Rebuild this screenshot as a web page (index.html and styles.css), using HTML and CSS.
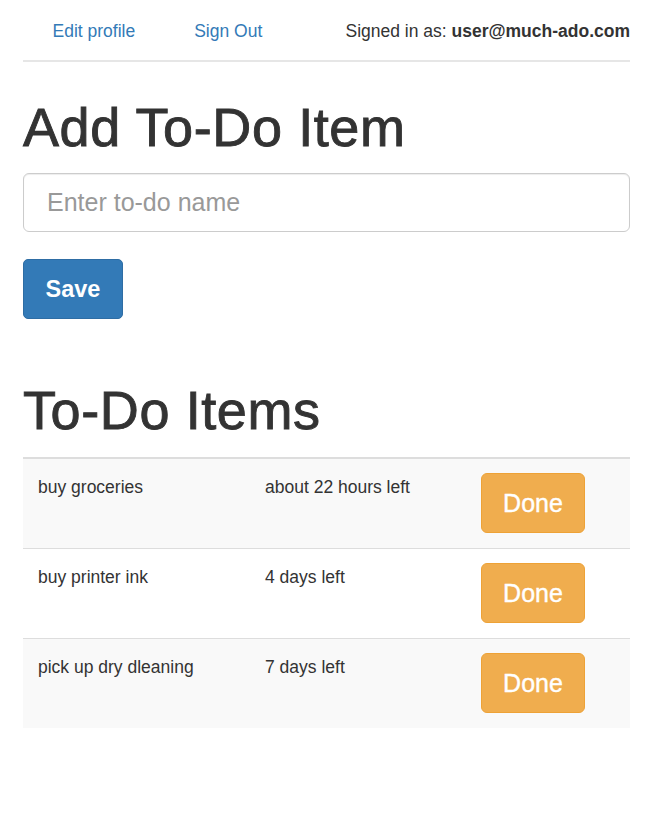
FILE: index.html
```html
<!DOCTYPE html>
<html lang="en">
<head>
<meta charset="utf-8">
<title>To-Do</title>
<link rel="stylesheet" href="styles.css">
</head>
<body>
<div class="container">
  <nav class="topnav">
    <ul class="nav-links">
      <li><a href="#">Edit profile</a></li>
      <li><a href="#">Sign Out</a></li>
    </ul>
    <div class="signed-in">Signed in as: <strong>user@much-ado.com</strong></div>
  </nav>

  <h1 class="title title-first">Add To-Do Item</h1>
  <form class="add-form">
    <input class="todo-input" type="text" placeholder="Enter to-do name">
    <button class="btn-save" type="button">Save</button>
  </form>

  <h1 class="title title-second">To-Do Items</h1>
  <table class="todo-table">
    <colgroup>
      <col class="col-name">
      <col class="col-time">
      <col class="col-action">
    </colgroup>
    <tbody>
      <tr>
        <td>buy groceries</td>
        <td>about 22 hours left</td>
        <td><button class="btn-done" type="button">Done</button></td>
      </tr>
      <tr>
        <td>buy printer ink</td>
        <td>4 days left</td>
        <td><button class="btn-done" type="button">Done</button></td>
      </tr>
      <tr>
        <td>pick up dry dleaning</td>
        <td>7 days left</td>
        <td><button class="btn-done" type="button">Done</button></td>
      </tr>
    </tbody>
  </table>
</div>
</body>
</html>
```

FILE: styles.css
```css
* { box-sizing: border-box; }

body {
  margin: 0;
  background: #fff;
  color: #333;
  font-family: "Liberation Sans", Arial, Helvetica, sans-serif;
  font-size: 17.5px;
}

.container {
  padding: 0 24px 0 23px;
}

.topnav {
  display: flex;
  align-items: center;
  justify-content: space-between;
  height: 62px;
  padding-top: 3px;
  border-bottom: 2px solid #e6e6e6;
}

.nav-links {
  display: flex;
  list-style: none;
  margin: 0;
  padding: 0;
}

.nav-links a {
  display: block;
  padding: 0 29.5px;
  color: #337ab7;
  text-decoration: none;
}

.signed-in strong {
  font-weight: bold;
}

.title {
  font-size: 54px;
  font-weight: normal;
  line-height: 58px;
  letter-spacing: 0.6px;
  margin: 0 0 17px;
  color: #333;
  -webkit-text-stroke: 0.9px #333;
}

.title-first { margin-top: 36px; }
.title-second { margin-top: 62px; margin-bottom: 18px; }

.add-form {
  margin: 0;
}

.todo-input {
  display: block;
  width: 100%;
  height: 59px;
  padding: 0 23px;
  border: 1px solid #ccc;
  border-radius: 6px;
  box-shadow: inset 0 1px 1px rgba(0,0,0,.075);
  font-family: inherit;
  font-size: 25px;
  color: #555;
  outline: none;
}

.todo-input::placeholder { color: #999; }

.btn-save {
  display: block;
  margin-top: 27px;
  width: 100px;
  height: 60px;
  background: #337ab7;
  border: 1px solid #2e6da4;
  border-radius: 5px;
  color: #fff;
  font-family: inherit;
  font-size: 23.5px;
  font-weight: bold;
  padding: 0;
}

.todo-table {
  width: 100%;
  border-collapse: collapse;
  table-layout: fixed;
  border-top: 2px solid #ddd;
}

.col-name { width: 227px; }
.col-time { width: 216px; }

.todo-table td {
  vertical-align: top;
  padding: 14px 15px 15px;
  line-height: 29px;
  border-top: 1px solid #ddd;
}

.todo-table tr:first-child td { border-top: none; }

.todo-table tr:nth-child(odd) td { background: #f9f9f9; }

.btn-done {
  display: block;
  width: 104px;
  height: 60px;
  background: #f0ad4e;
  border: 1px solid #eea236;
  border-radius: 6px;
  color: #fff;
  font-family: inherit;
  font-size: 25px;
  -webkit-text-stroke: 0.4px #fff;
  padding: 0;
}
```
